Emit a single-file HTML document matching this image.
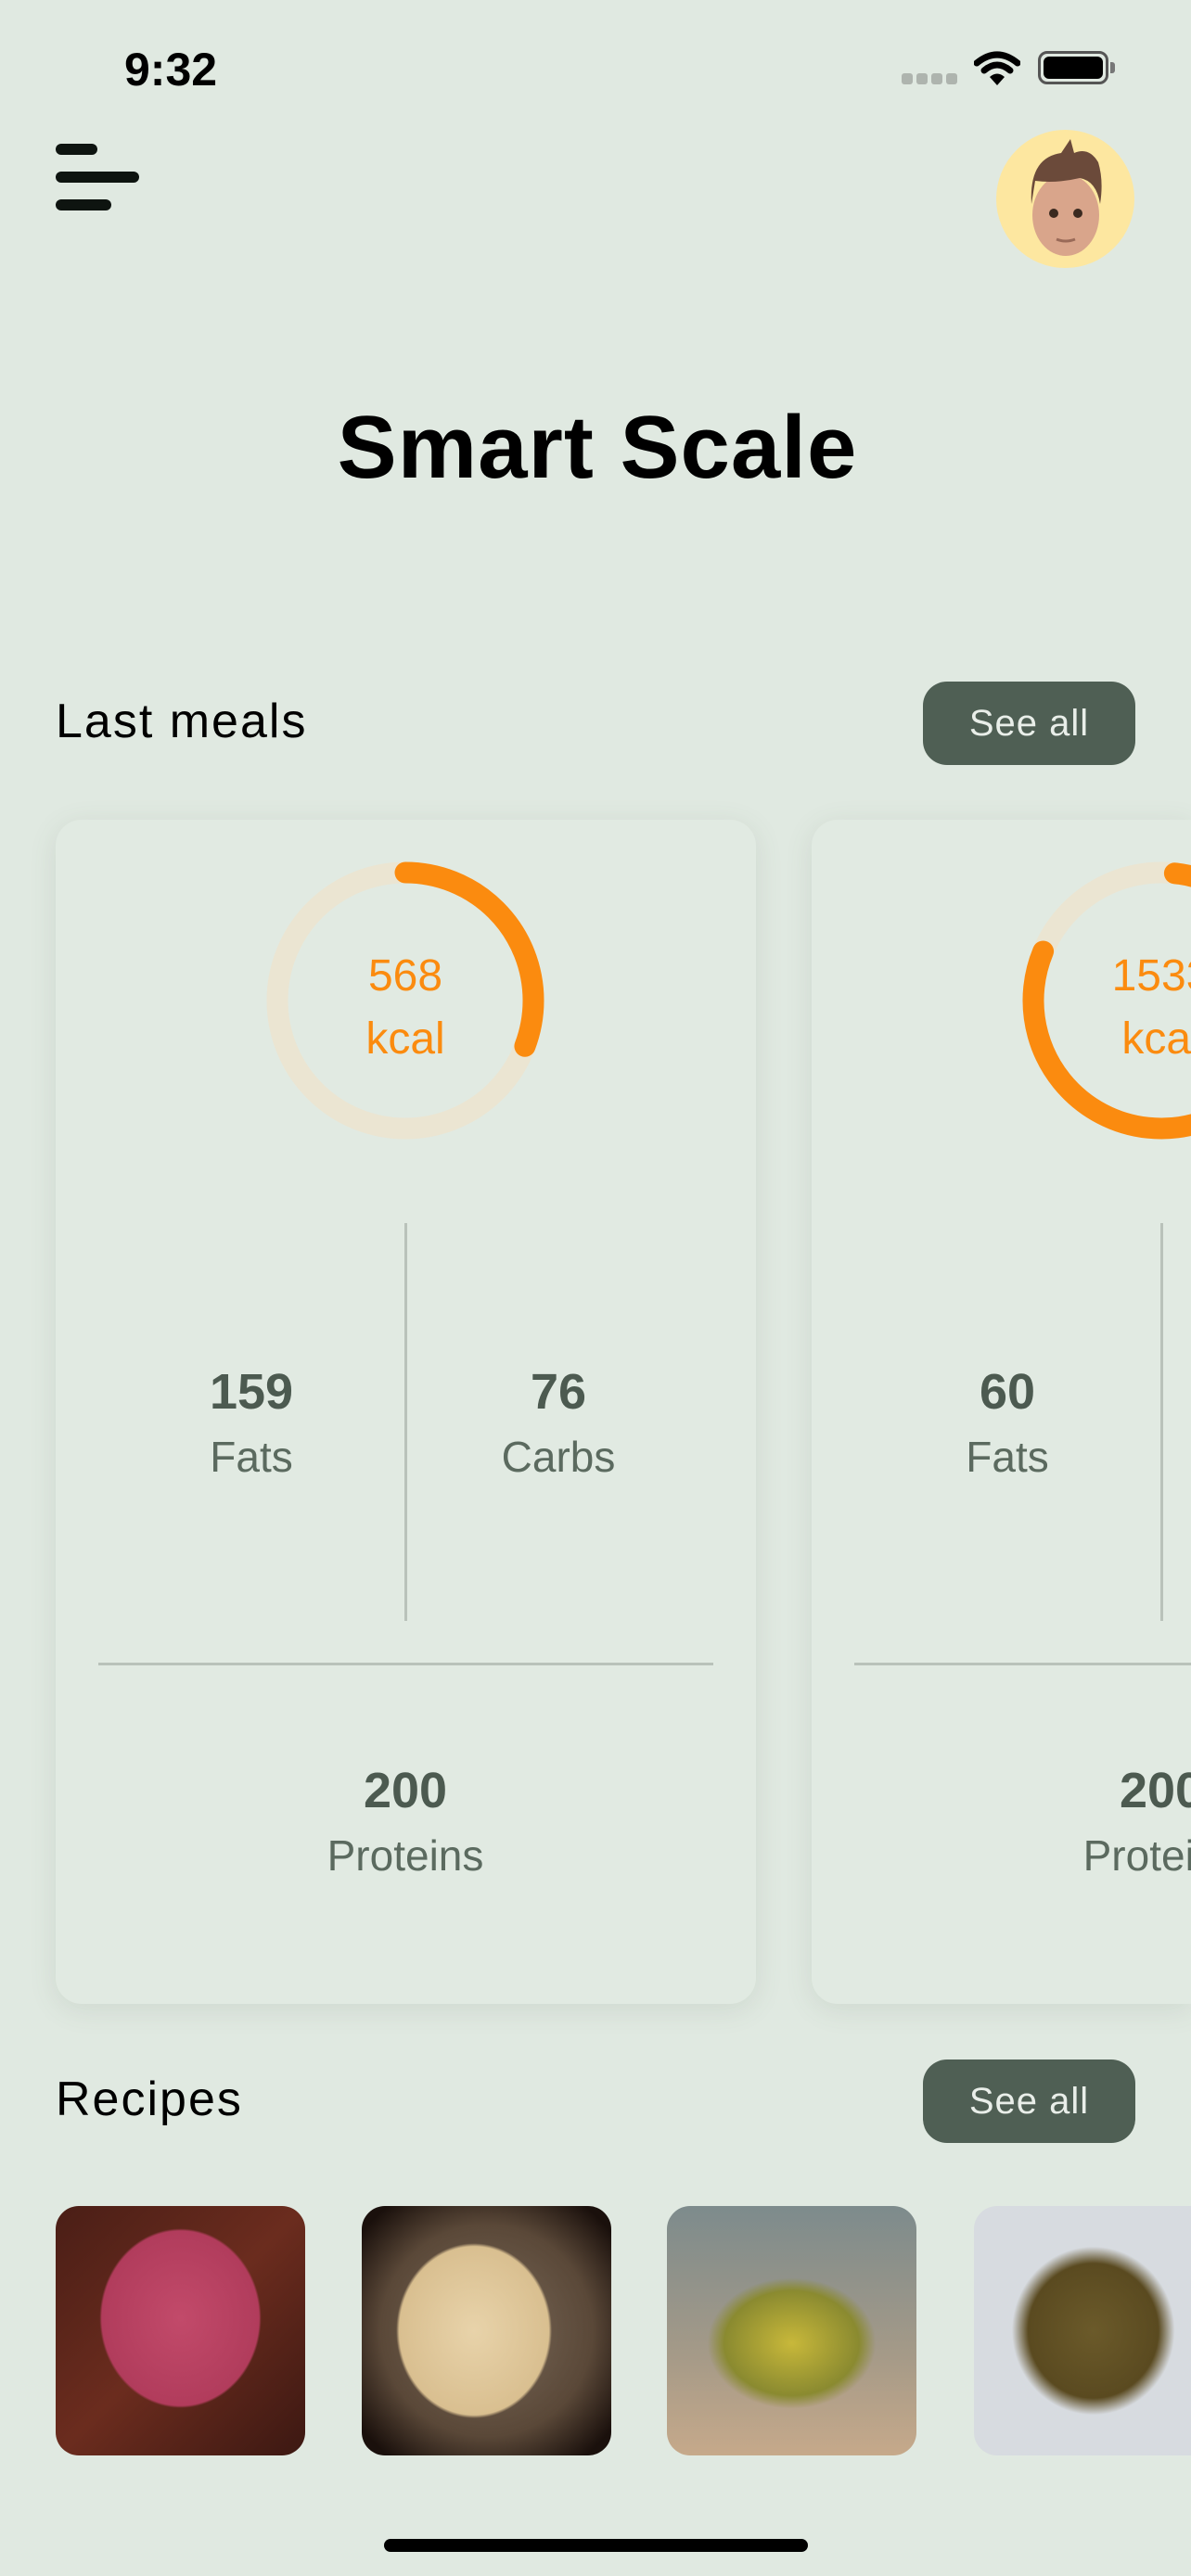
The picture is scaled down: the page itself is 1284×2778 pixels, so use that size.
<!DOCTYPE html>
<html><head><meta charset="utf-8"><style>
*{margin:0;padding:0;box-sizing:border-box}
html,body{width:1284px;height:2778px;overflow:hidden;background:#e0e9e1;font-family:"Liberation Sans",sans-serif;position:relative}
.abs{position:absolute}
.c{position:absolute;transform:translateX(-50%);white-space:nowrap;text-align:center}
.btn{position:absolute;left:995px;width:229px;height:90px;border-radius:26px;background:#4f5f54;color:#e9eee9;font-size:40px;line-height:90px;text-align:center;letter-spacing:1px}
.card{position:absolute;top:884px;height:1277px;width:755px;border-radius:28px;background:#e1eae2;box-shadow:0 6px 30px rgba(80,100,85,.12)}
.num{font-size:54px;font-weight:bold;color:#4c5a50}
.lab{font-size:46px;color:#5b6a5f}
.vl{position:absolute;width:3px;background:#b9c2ba}
.hl{position:absolute;height:3px;background:#b9c2ba}
.img{position:absolute;top:2379px;width:269px;height:269px;border-radius:25px;overflow:hidden}
</style></head><body>
<div class="abs" style="left:134px;top:46px;font-size:50px;font-weight:bold;color:#000">9:32</div>
<div class="abs" style="left:972px;top:79px;width:12px;height:12px;border-radius:3px;background:#aeb4ae"></div>
<div class="abs" style="left:988px;top:79px;width:12px;height:12px;border-radius:3px;background:#aeb4ae"></div>
<div class="abs" style="left:1004px;top:79px;width:12px;height:12px;border-radius:3px;background:#aeb4ae"></div>
<div class="abs" style="left:1020px;top:79px;width:12px;height:12px;border-radius:3px;background:#aeb4ae"></div>
<svg class="abs" style="left:1050px;top:54px" width="50" height="40" viewBox="0 0 50 40"><path d="M3 14 Q25 -4 47 14" stroke="#000" stroke-width="7" fill="none" stroke-linecap="round"/><path d="M11 22 Q25 10 39 22" stroke="#000" stroke-width="7" fill="none" stroke-linecap="round"/><path d="M17 29 L25 38 L33 29 Q25 22 17 29Z" fill="#000"/></svg>
<div class="abs" style="left:1119px;top:55px;width:76px;height:36px;border:3px solid #555;border-radius:10px;padding:3px"><div style="width:100%;height:100%;background:#000;border-radius:6px"></div></div>
<div class="abs" style="left:1197px;top:67px;width:5px;height:12px;background:#777;border-radius:0 3px 3px 0"></div>
<div class="abs" style="left:60px;top:155px;width:45px;height:12px;border-radius:6px;background:#0e1410"></div>
<div class="abs" style="left:60px;top:185px;width:90px;height:12px;border-radius:6px;background:#0e1410"></div>
<div class="abs" style="left:60px;top:215px;width:60px;height:12px;border-radius:6px;background:#0e1410"></div>
<div class="abs" style="left:1074px;top:140px;width:149px;height:149px;border-radius:50%;background:#fde7a0;overflow:hidden">
<svg width="149" height="149" viewBox="0 0 149 149"><ellipse cx="75" cy="92" rx="36" ry="44" fill="#d9a58b"/><path d="M38 80 Q35 30 70 25 L80 10 L84 25 Q100 18 110 35 Q116 55 112 80 Q108 55 90 52 Q65 58 42 55Z" fill="#6b4a3a"/><circle cx="62" cy="90" r="5" fill="#3a2a20"/><circle cx="88" cy="90" r="5" fill="#3a2a20"/><path d="M65 118 Q75 122 85 118" stroke="#9a6a58" stroke-width="3" fill="none"/></svg></div>
<div class="abs" style="left:0;width:1284px;top:428px;text-align:center;font-size:96px;font-weight:bold;color:#000;letter-spacing:1px;padding-left:4px">Smart Scale</div>
<div class="abs" style="left:60px;top:748px;font-size:52px;color:#000;letter-spacing:2px">Last meals</div>
<div class="btn" style="top:735px">See all</div>

<div class="card" style="left:60px">
<svg class="abs" style="left:227px;top:45px" width="300" height="300" viewBox="0 0 300 300"><circle cx="150" cy="150" r="138" stroke="#ebe5d2" stroke-width="23" fill="none"/><circle cx="150" cy="150" r="138" stroke="#fb8b0f" stroke-width="23" fill="none" stroke-linecap="round" stroke-dasharray="267 900" transform="rotate(-90 150 150)"/></svg>
<div class="c" style="left:377px;top:135px;font-size:48px;color:#fb8b0f;line-height:68px">568<br>kcal</div>
<div class="vl" style="left:376px;top:435px;height:429px"></div>
<div class="c num" style="left:211px;top:586px">159</div>
<div class="c lab" style="left:211px;top:660px">Fats</div>
<div class="c num" style="left:542px;top:586px">76</div>
<div class="c lab" style="left:542px;top:660px">Carbs</div>
<div class="hl" style="left:46px;top:909px;width:663px"></div>
<div class="c num" style="left:377px;top:1016px">200</div>
<div class="c lab" style="left:377px;top:1090px">Proteins</div>
</div>
<div class="card" style="left:875px;width:409px;border-radius:28px 0 0 28px;overflow:hidden">
<svg class="abs" style="left:227px;top:45px" width="300" height="300" viewBox="0 0 300 300"><circle cx="150" cy="150" r="138" stroke="#ebe5d2" stroke-width="23" fill="none"/><circle cx="150" cy="150" r="138" stroke="#fb8b0f" stroke-width="23" fill="none" stroke-linecap="round" stroke-dasharray="690 900" transform="rotate(-84 150 150)"/></svg>
<div class="c" style="left:377px;top:135px;font-size:48px;color:#fb8b0f;line-height:68px">1533<br>kcal</div>
<div class="vl" style="left:376px;top:435px;height:429px"></div>
<div class="c num" style="left:211px;top:586px">60</div>
<div class="c lab" style="left:211px;top:660px">Fats</div>
<div class="hl" style="left:46px;top:909px;width:663px"></div>
<div class="c num" style="left:377px;top:1016px">200</div>
<div class="c lab" style="left:377px;top:1090px">Proteins</div>
</div>

<div class="abs" style="left:60px;top:2234px;font-size:52px;color:#000;letter-spacing:2px">Recipes</div>
<div class="btn" style="top:2221px">See all</div>
<div class="img" style="left:60px;background:radial-gradient(ellipse 45% 50% at 50% 45%,#c24a6a 0,#b13c5c 70%,transparent 72%),linear-gradient(135deg,#4a1e16,#6b2c1e 50%,#3c1812)"></div>
<div class="img" style="left:390px;background:radial-gradient(ellipse 40% 45% at 45% 50%,#e8d3aa 0,#d9bf90 75%,transparent 78%),radial-gradient(circle at 50% 50%,#7a6a5a 0,#5a4838 60%,#1a100c 90%)"></div>
<div class="img" style="left:719px;background:radial-gradient(ellipse 45% 35% at 50% 55%,#c8b83a 0,#8a8a30 60%,transparent 75%),linear-gradient(180deg,#7d8b8c,#a59a88 60%,#c6a98a)"></div>
<div class="img" style="left:1050px;width:234px;border-radius:25px 0 0 25px;background:radial-gradient(ellipse 50% 45% at 55% 50%,#6b5a2a 0,#5a4a20 60%,#d7dbe0 75%),#eceef0"></div>
<div class="abs" style="left:414px;top:2738px;width:457px;height:14px;border-radius:7px;background:#000"></div>
</body></html>
